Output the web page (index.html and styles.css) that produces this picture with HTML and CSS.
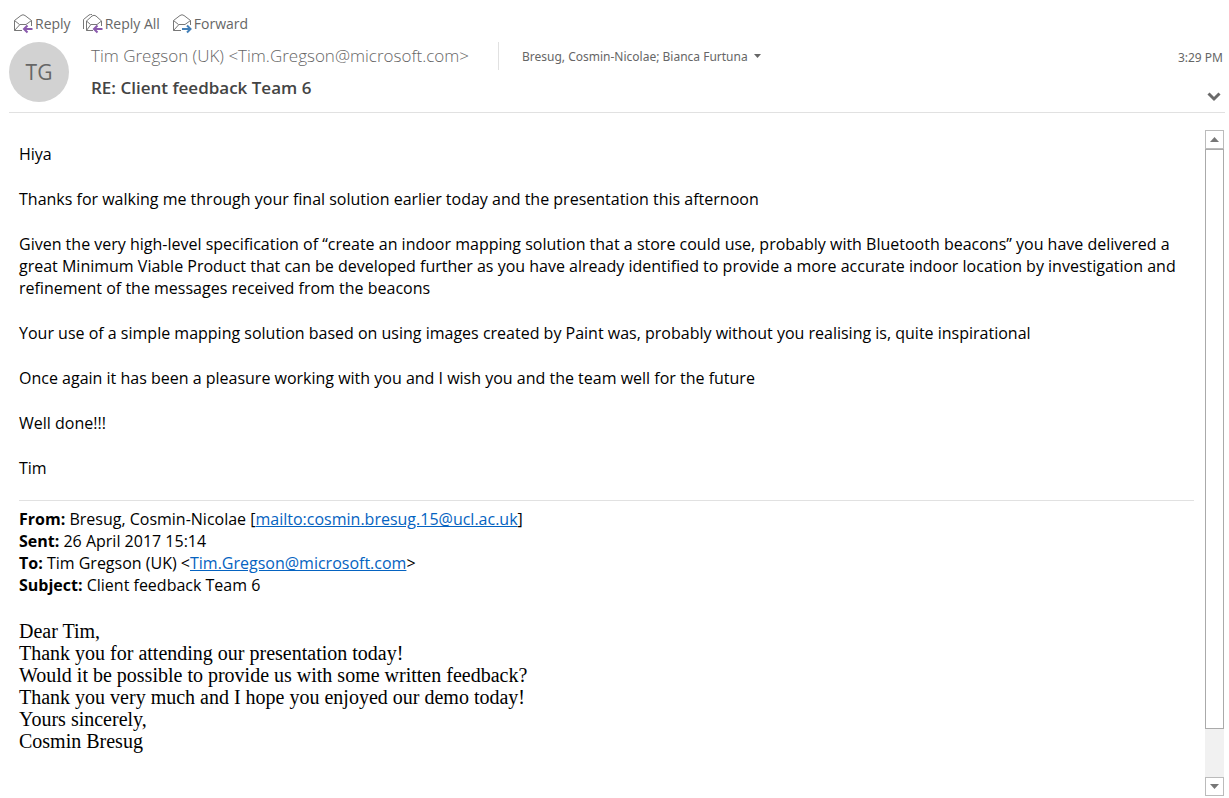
FILE: index.html
```html
<!DOCTYPE html>
<html lang="en">
<head>
<meta charset="utf-8">
<title>RE: Client feedback Team 6</title>
<link rel="stylesheet" href="styles.css">
</head>
<body>
<main class="message">
  <div class="toolbar">
    <button type="button" class="action">
      <svg class="action-icon" width="20" height="20" viewBox="0 0 20 20" fill="none" aria-hidden="true">
        <path d="M9 16.500H1.500V6.500L8 1.500Q10 0 12 1.500L18.500 6.500V12M1.500 6.500L6.500 10.500H13L18.500 6.500M1.500 16.500L6.500 11" stroke="#777"/>
        <path d="M19.500 15H12M14.500 11.500L11 15L14.500 18.500" stroke="#8a5aad" stroke-width="2"/>
      </svg>Reply</button>
    <button type="button" class="action">
      <svg class="action-icon" width="20" height="20" viewBox="0 0 20 20" fill="none" aria-hidden="true">
        <path d="M0.500 15V5.500L6 1Q7.500 0 9 0.500M10 16.500H3.500V7L9 2Q11 0.500 13 2L18.500 7V12M3.500 7L7.500 10.500H14L18.500 7M3.500 16.500L7.500 11" stroke="#777"/>
        <path d="M19.500 15H12M14.500 11.500L11 15L14.500 18.500" stroke="#8a5aad" stroke-width="2"/>
      </svg>Reply All</button>
    <button type="button" class="action">
      <svg class="action-icon" width="20" height="20" viewBox="0 0 20 20" fill="none" aria-hidden="true">
        <path d="M9 16.500H1.500V6.500L8 1.500Q10 0 12 1.500L18.500 6.500V11M1.500 6.500L6.500 10.500H13L18.500 6.500M1.500 16.500L6.500 11" stroke="#777"/>
        <path d="M10 15H18M15 11.500L18.500 15L15 18.500" stroke="#4480b8" stroke-width="2"/>
      </svg>Forward</button>
  </div>

  <header class="header">
    <div class="avatar">TG</div>
    <div class="summary">
      <div class="people">
        <span class="sender">Tim Gregson (UK) &lt;Tim.Gregson@microsoft.com&gt;</span>
        <button type="button" class="recipients">Bresug, Cosmin-Nicolae; Bianca Furtuna
          <svg width="7" height="4" viewBox="0 0 7 4" aria-hidden="true"><path d="M0 0H7L3.500 4Z" fill="#666"/></svg>
        </button>
      </div>
      <h1 class="subject">RE: Client feedback Team 6</h1>
    </div>
    <div class="meta">
      <time class="time">3:29 PM</time>
      <button type="button" class="expand" aria-label="Expand header">
        <svg width="14" height="10" viewBox="0 0 14 10" fill="none"><path d="M1.500 1.500L7 7L12.500 1.500" stroke="#6a6a6a" stroke-width="3"/></svg>
      </button>
    </div>
  </header>

  <div class="reader">
    <article class="content">
      <p>Hiya</p>
      <p>Thanks for walking me through your final solution earlier today and the presentation this afternoon</p>
      <p>Given the very high-level specification of “create an indoor mapping solution that a store could use, probably with Bluetooth beacons” you have delivered a great Minimum Viable Product that can be developed further as you have already identified to provide a more accurate indoor location by investigation and refinement of the messages received from the beacons</p>
      <p>Your use of a simple mapping solution based on using images created by Paint was, probably without you realising is, quite inspirational</p>
      <p>Once again it has been a pleasure working with you and I wish you and the team well for the future</p>
      <p>Well done!!!</p>
      <p>Tim</p>
      <section class="quoted">
        <p><b>From:</b> Bresug, Cosmin-Nicolae [<a href="mailto:cosmin.bresug.15@ucl.ac.uk">mailto:cosmin.bresug.15@ucl.ac.uk</a>]<br>
        <b>Sent:</b> 26 April 2017 15:14<br>
        <b>To:</b> Tim Gregson (UK) &lt;<a href="mailto:Tim.Gregson@microsoft.com">Tim.Gregson@microsoft.com</a>&gt;<br>
        <b>Subject:</b> Client feedback Team 6</p>
        <p class="letter">Dear Tim,<br>
        Thank you for attending our presentation today!<br>
        Would it be possible to provide us with some written feedback?<br>
        Thank you very much and I hope you enjoyed our demo today!<br>
        Yours sincerely,<br>
        Cosmin Bresug</p>
      </section>
    </article>
    <div class="scrollbar">
      <button type="button" class="scroll-button" aria-label="Scroll up"><svg width="9" height="5" viewBox="0 0 9 5"><path d="M0 5L4.500 0L9 5Z" fill="#777"/></svg></button>
      <div class="thumb"></div>
      <div class="track"></div>
      <button type="button" class="scroll-button" aria-label="Scroll down"><svg width="9" height="5" viewBox="0 0 9 5"><path d="M0 0H9L4.500 5Z" fill="#777"/></svg></button>
    </div>
  </div>
</main>
</body>
</html>
```

FILE: styles.css
```css
* {
  box-sizing: border-box;
}

body {
  margin: 0;
  background: #fff;
  color: #000;
  font-family: "Open Sans", "Noto Sans", sans-serif;
}

button {
  border: 0;
  padding: 0;
  background: none;
  color: inherit;
  font: inherit;
}

svg {
  display: block;
}

.message {
  display: flex;
  flex-direction: column;
  min-height: 100vh;
  padding: 14px 4px 2px 9px;
}

.toolbar {
  display: flex;
  gap: 12px;
  padding-left: 4px;
  color: #666;
  font-size: 14px;
  line-height: 20px;
}

.action {
  display: flex;
  align-items: center;
  gap: 2px;
}

.header {
  display: flex;
  gap: 22px;
  height: 79px;
  padding-top: 8px;
  border-bottom: 1px solid #e1e1e1;
  color: #666;
}

.avatar {
  display: flex;
  flex: none;
  align-items: center;
  justify-content: center;
  width: 60px;
  height: 60px;
  border-radius: 50%;
  background: #d2d2d2;
  font-size: 21px;
}

.summary {
  flex: 1;
}

.people {
  display: flex;
  align-items: center;
}

.sender {
  padding-right: 29px;
  border-right: 1px solid #e1e1e1;
  font-size: 17px;
  font-weight: 300;
  line-height: 28px;
}

.recipients {
  display: flex;
  align-items: center;
  gap: 6px;
  padding-left: 23px;
  font-family: "Noto Sans", sans-serif;
  font-size: 12px;
}

.subject {
  margin: 7px 0 0;
  color: #444;
  font-size: 17px;
  font-weight: 600;
  line-height: 22px;
}

.meta {
  display: flex;
  flex-direction: column;
  align-items: flex-end;
  gap: 24px;
  padding: 6px 2px 0 0;
  font-family: "Noto Sans", sans-serif;
  font-size: 12px;
  line-height: 20px;
}

.expand {
  padding-right: 2px;
}

.reader {
  display: flex;
  flex: 1;
  gap: 11px;
  padding: 17px 1px 0 0;
}

.content {
  flex: 1;
  padding: 13px 0 20px 10px;
  font-size: 16px;
  line-height: 22px;
}

.content p {
  margin: 0 0 23px;
}

.content a {
  color: #0563c1;
}

.quoted {
  margin-top: -2px;
  padding-top: 7px;
  border-top: 1px solid #e1e1e1;
}

.content .letter {
  margin: 24px 0 0;
  font-family: "Liberation Serif", serif;
  font-size: 20px;
}

.scrollbar {
  display: flex;
  flex: none;
  flex-direction: column;
  width: 19px;
  background: #f1f1f1;
}

.scroll-button {
  display: flex;
  align-items: center;
  justify-content: center;
  height: 19px;
  border: 1px solid #bbb;
  background: #fff;
}

.thumb {
  flex: 12;
  border: 1px solid #aaa;
  background: #fff;
}

.track {
  flex: 1;
}
```
